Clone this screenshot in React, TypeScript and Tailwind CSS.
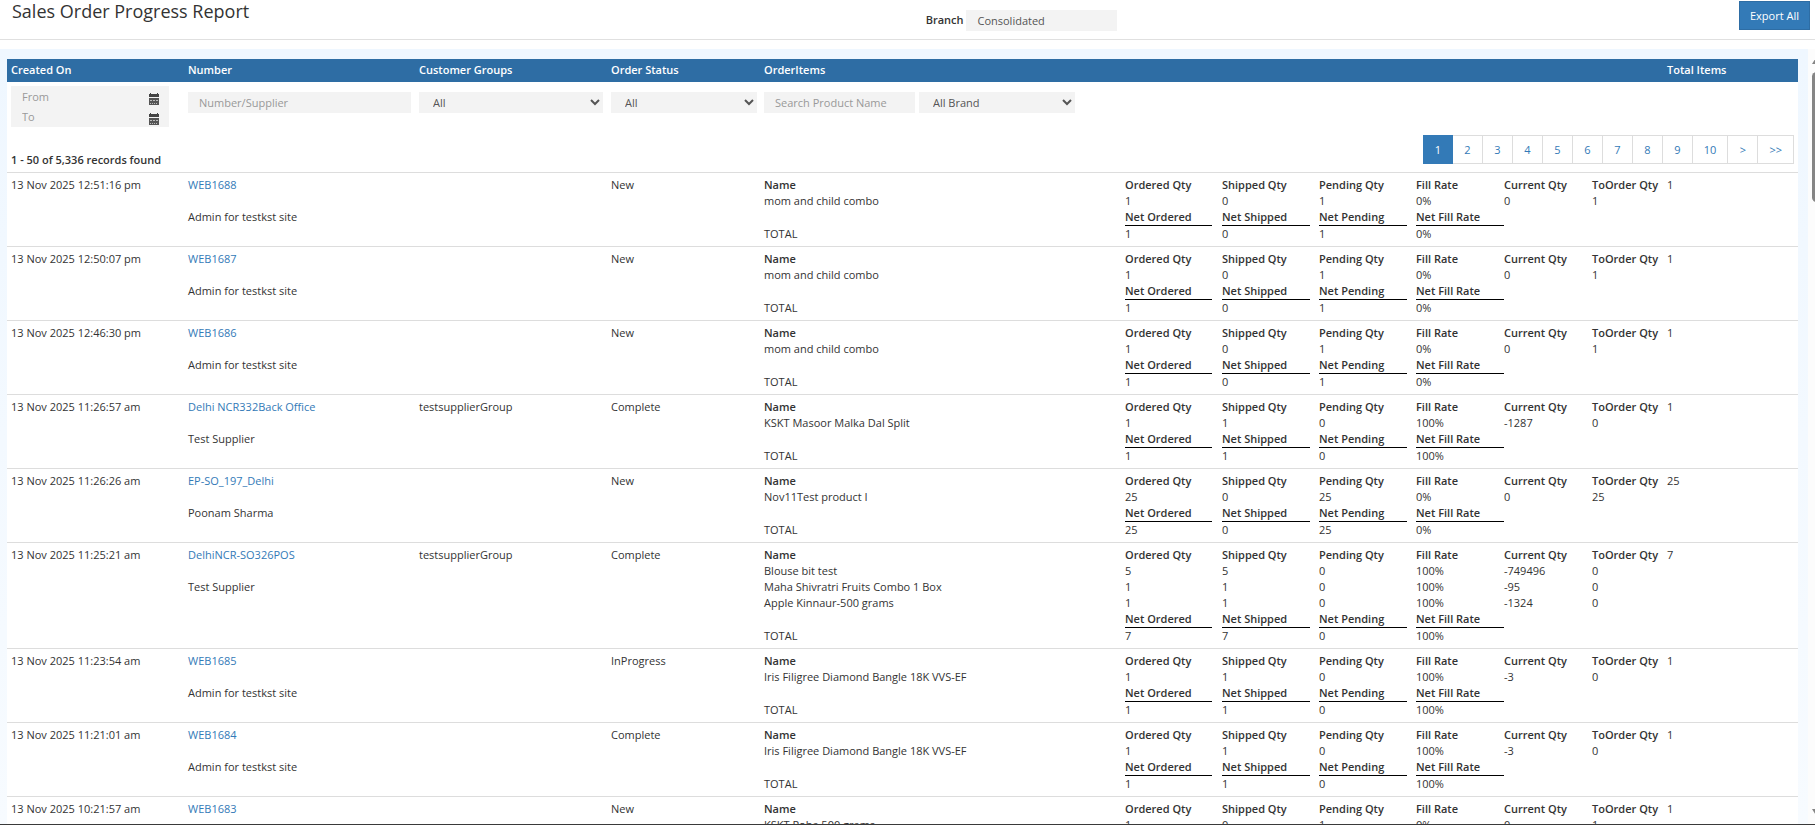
import React from 'react';

type Item = {
  name: string;
  ordered: string;
  shipped: string;
  pending: string;
  fill: string;
  current: string;
  toOrder: string;
};

type Order = {
  createdOn: string;
  number: string;
  customer: string;
  group?: string;
  status: string;
  items: Item[];
  net: [string, string, string, string];
  total: string;
};

const item = (
  name: string,
  ordered: string,
  shipped: string,
  pending: string,
  fill: string,
  current: string,
  toOrder: string,
): Item => ({ name, ordered, shipped, pending, fill, current, toOrder });

const ORDERS: Order[] = [
  {
    createdOn: '13 Nov 2025 12:51:16 pm',
    number: 'WEB1688',
    customer: 'Admin for testkst site',
    status: 'New',
    items: [item('mom and child combo', '1', '0', '1', '0%', '0', '1')],
    net: ['1', '0', '1', '0%'],
    total: '1',
  },
  {
    createdOn: '13 Nov 2025 12:50:07 pm',
    number: 'WEB1687',
    customer: 'Admin for testkst site',
    status: 'New',
    items: [item('mom and child combo', '1', '0', '1', '0%', '0', '1')],
    net: ['1', '0', '1', '0%'],
    total: '1',
  },
  {
    createdOn: '13 Nov 2025 12:46:30 pm',
    number: 'WEB1686',
    customer: 'Admin for testkst site',
    status: 'New',
    items: [item('mom and child combo', '1', '0', '1', '0%', '0', '1')],
    net: ['1', '0', '1', '0%'],
    total: '1',
  },
  {
    createdOn: '13 Nov 2025 11:26:57 am',
    number: 'Delhi NCR332Back Office',
    customer: 'Test Supplier',
    group: 'testsupplierGroup',
    status: 'Complete',
    items: [item('KSKT Masoor Malka Dal Split', '1', '1', '0', '100%', '-1287', '0')],
    net: ['1', '1', '0', '100%'],
    total: '1',
  },
  {
    createdOn: '13 Nov 2025 11:26:26 am',
    number: 'EP-SO_197_Delhi',
    customer: 'Poonam Sharma',
    status: 'New',
    items: [item('Nov11Test product I', '25', '0', '25', '0%', '0', '25')],
    net: ['25', '0', '25', '0%'],
    total: '25',
  },
  {
    createdOn: '13 Nov 2025 11:25:21 am',
    number: 'DelhiNCR-SO326POS',
    customer: 'Test Supplier',
    group: 'testsupplierGroup',
    status: 'Complete',
    items: [
      item('Blouse bit test', '5', '5', '0', '100%', '-749496', '0'),
      item('Maha Shivratri Fruits Combo 1 Box', '1', '1', '0', '100%', '-95', '0'),
      item('Apple Kinnaur-500 grams', '1', '1', '0', '100%', '-1324', '0'),
    ],
    net: ['7', '7', '0', '100%'],
    total: '7',
  },
  {
    createdOn: '13 Nov 2025 11:23:54 am',
    number: 'WEB1685',
    customer: 'Admin for testkst site',
    status: 'InProgress',
    items: [item('Iris Filigree Diamond Bangle 18K VVS-EF', '1', '1', '0', '100%', '-3', '0')],
    net: ['1', '1', '0', '100%'],
    total: '1',
  },
  {
    createdOn: '13 Nov 2025 11:21:01 am',
    number: 'WEB1684',
    customer: 'Admin for testkst site',
    status: 'Complete',
    items: [item('Iris Filigree Diamond Bangle 18K VVS-EF', '1', '1', '0', '100%', '-3', '0')],
    net: ['1', '1', '0', '100%'],
    total: '1',
  },
  {
    createdOn: '13 Nov 2025 10:21:57 am',
    number: 'WEB1683',
    customer: 'Admin for testkst site',
    status: 'New',
    items: [item('KSKT Poha 500 grams', '1', '0', '1', '0%', '0', '1')],
    net: ['1', '0', '1', '0%'],
    total: '1',
  },
];

const PAGES = ['1', '2', '3', '4', '5', '6', '7', '8', '9', '10', '>', '>>'];

function CalendarIcon() {
  return (
    <svg width="10" height="12" viewBox="0 0 10 12" aria-hidden="true">
      <path d="M1 0h1v1h6V0h1v1h1v3H0V1h1z" fill="#444" />
      <path d="M0 5h10v7H0z" fill="#555" />
      <path d="M1 7h2v1H1zm3 0h2v1H4zm3 0h2v1H7zM1 10h1v1H1zm2 0h1v1H3zm2 0h1v1H5zm2 0h1v1H7z" fill="#bbb" />
    </svg>
  );
}

function DateField({ label }: { label: string }) {
  return (
    <div className="flex items-start justify-between pl-[11px] pr-[10px]">
      <input
        type="text"
        aria-label={label}
        placeholder={label}
        className="w-24 h-5 bg-transparent outline-none placeholder:text-[#999]"
      />
      <button type="button" aria-label={`Pick ${label} date`} className="pt-[7px]">
        <CalendarIcon />
      </button>
    </div>
  );
}

function FilterSelect({ label, value, className }: { label: string; value: string; className: string }) {
  return (
    <select
      aria-label={label}
      defaultValue={value}
      className={`h-[21px] bg-[#f3f3f3] text-[#555] pl-[10px] outline-none ${className}`}
    >
      <option>{value}</option>
    </select>
  );
}

function OrderItems({ order }: { order: Order }) {
  return (
    <table className="w-full table-fixed text-left">
      <colgroup>
        <col />
        <col className="w-[97px]" />
        <col className="w-[97px]" />
        <col className="w-[97px]" />
        <col className="w-[88px]" />
        <col className="w-[88px]" />
        <col className="w-[67px]" />
      </colgroup>
      <tbody>
        <tr className="whitespace-nowrap">
          <th className="font-semibold">Name</th>
          <th className="font-semibold">Ordered Qty</th>
          <th className="font-semibold">Shipped Qty</th>
          <th className="font-semibold">Pending Qty</th>
          <th className="font-semibold">Fill Rate</th>
          <th className="font-semibold">Current Qty</th>
          <th className="font-semibold">ToOrder Qty</th>
        </tr>
        {order.items.map((it) => (
          <tr key={it.name}>
            <td>{it.name}</td>
            <td>{it.ordered}</td>
            <td>{it.shipped}</td>
            <td>{it.pending}</td>
            <td>{it.fill}</td>
            <td>{it.current}</td>
            <td>{it.toOrder}</td>
          </tr>
        ))}
        <tr>
          <td></td>
          <th className="font-semibold"><div className="mr-[10px] border-b border-black">Net Ordered</div></th>
          <th className="font-semibold"><div className="mr-[9px] border-b border-black">Net Shipped</div></th>
          <th className="font-semibold"><div className="mr-[9px] border-b border-black">Net Pending</div></th>
          <th className="font-semibold"><div className="border-b border-black">Net Fill Rate</div></th>
        </tr>
        <tr>
          <td>TOTAL</td>
          {order.net.map((n, i) => (
            <td key={i}>{n}</td>
          ))}
        </tr>
      </tbody>
    </table>
  );
}

export default function App() {
  return (
    <div className="h-screen flex flex-col overflow-hidden bg-white border-b border-[#3a3a3a] font-['Open_Sans',sans-serif] text-[11px] leading-4 text-[#333]">
      <header className="flex h-10 shrink-0 border-b border-[#e0e0e0]">
        <h1 className="w-[51%] pl-3 text-[18px] leading-[22px] font-medium">Sales Order Progress Report</h1>
        <div className="flex items-start gap-[3px] pt-[10px]">
          <label htmlFor="branch" className="pt-[2px] font-semibold">Branch</label>
          <input
            id="branch"
            type="text"
            defaultValue="Consolidated"
            className="w-[151px] h-[21px] bg-[#f3f3f3] text-[#555] px-[11px] outline-none"
          />
        </div>
        <div className="flex-1 flex items-start justify-end pt-px pr-[5px]">
          <button type="button" className="h-[29px] px-[10px] bg-[#337ab7] border border-[#2e6da4] text-white">
            Export All
          </button>
        </div>
      </header>

      <main className="mt-[9px] flex flex-1 min-h-0 overflow-hidden">
        <div className="flex-1 pl-[7px] pr-[10px] pt-[10px] bg-linear-to-b from-[#eff7ff] to-[#f7fbff]">
          <table className="w-full table-fixed bg-white text-left">
            <colgroup>
              <col className="w-[177px]" />
              <col className="w-[231px]" />
              <col className="w-[192px]" />
              <col className="w-[153px]" />
              <col />
              <col className="w-[135px]" />
            </colgroup>
            <thead>
              <tr className="h-[23px] bg-[#2e6da4] text-white">
                <th className="px-1 pb-[2px] font-semibold">Created On</th>
                <th className="px-1 pb-[2px] font-semibold">Number</th>
                <th className="px-1 pb-[2px] font-semibold">Customer Groups</th>
                <th className="px-1 pb-[2px] font-semibold">Order Status</th>
                <th className="px-1 pb-[2px] font-semibold">OrderItems</th>
                <th className="px-1 pb-[2px] font-semibold">Total Items</th>
              </tr>
            </thead>
            <tbody>
              {/* Filters */}
              <tr className="align-top">
                <td className="p-1">
                  <div className="w-[158px] h-[41px] bg-[#f3f3f3]">
                    <DateField label="From" />
                    <DateField label="To" />
                  </div>
                </td>
                <td className="px-1 pt-[10px]">
                  <input
                    type="text"
                    aria-label="Number/Supplier"
                    placeholder="Number/Supplier"
                    className="block w-full h-[21px] bg-[#f3f3f3] px-[11px] outline-none placeholder:text-[#999]"
                  />
                </td>
                <td className="px-1 pt-[10px]">
                  <FilterSelect label="Customer Groups" value="All" className="block w-full" />
                </td>
                <td className="pl-1 pr-[3px] pt-[10px]">
                  <FilterSelect label="Order Status" value="All" className="block w-full" />
                </td>
                <td className="px-1 pt-[10px]">
                  <div className="flex gap-1">
                    <input
                      type="text"
                      aria-label="Search Product Name"
                      placeholder="Search Product Name"
                      className="w-[151px] h-[21px] bg-[#f3f3f3] px-[11px] outline-none placeholder:text-[#999]"
                    />
                    <FilterSelect label="Brand" value="All Brand" className="w-[156px]" />
                  </div>
                </td>
                <td></td>
              </tr>
              {/* Record count and pagination */}
              <tr>
                <td colSpan={6} className="px-1 pt-1 pb-1">
                  <div className="flex items-end justify-between">
                    <span className="font-semibold">1 - 50 of 5,336 records found</span>
                    <nav aria-label="Pages" className="mb-1 flex text-center">
                      {PAGES.map((p, i) => (
                        <a
                          key={p}
                          href="#"
                          className={
                            i === 0
                              ? 'h-[29px] min-w-[30px] leading-[27px] border border-[#337ab7] bg-[#337ab7] text-white'
                              : 'h-[29px] min-w-[30px] px-[11px] leading-[27px] border border-l-0 border-[#ddd] text-[#337ab7]'
                          }
                        >
                          {p}
                        </a>
                      ))}
                    </nav>
                  </div>
                </td>
              </tr>
              {ORDERS.map((o) => (
                <tr key={o.number} className="align-top border-t border-[#ddd]">
                  <td className="p-1">{o.createdOn}</td>
                  <td className="p-1">
                    <a href="#" className="text-[#337ab7]">{o.number}</a>
                    <p className="mt-4 font-medium">{o.customer}</p>
                  </td>
                  <td className="p-1">{o.group}</td>
                  <td className="p-1">{o.status}</td>
                  <td className="p-1"><OrderItems order={o} /></td>
                  <td className="p-1">{o.total}</td>
                </tr>
              ))}
            </tbody>
          </table>
        </div>

        {/* Scrollbar */}
        <div className="w-[7px] shrink-0 overflow-hidden bg-[#fcfcfc] pl-1 pt-2 pb-2 flex flex-col" aria-hidden="true">
          <svg className="shrink-0" width="9" height="7" viewBox="0 0 9 7">
            <path d="M4.500 0L9 7H0z" fill="#858585" />
          </svg>
          <div className="mt-2 w-[9px] h-[130px] shrink-0 rounded-full bg-[#858585]" />
          <svg className="mt-auto shrink-0" width="9" height="7" viewBox="0 0 9 7">
            <path d="M0 0h9L4.500 7z" fill="#858585" />
          </svg>
        </div>
      </main>
    </div>
  );
}
